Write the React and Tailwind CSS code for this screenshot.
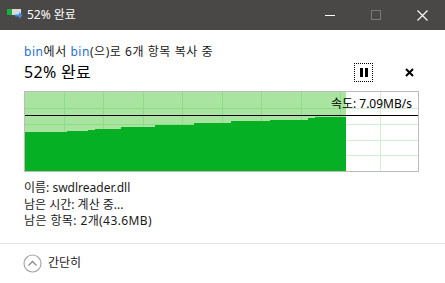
import React from "react";

const F = { fontFamily: '"Noto Sans", "Noto Sans CJK KR", sans-serif' };

function Graph() {
  const W = 395, H = 81, fill = 322;
  const steps = "1,80 1,41 43,41 43,40 64,40 64,39 71,39 71,38 97,38 97,36 131,36 131,34 170,34 170,32 207,32 207,30 246,30 246,29 284,29 284,27 291,27 291,26 322,26 322,80";
  const vx = [40, 79, 119, 158, 198, 237, 277, 316, 356];
  const hy = [17, 33, 49, 64];
  return (
    <div className="relative w-[395px] h-[81px]">
      <svg width={W} height={H} className="block">
        <rect x="0.5" y="0.5" width={W - 1} height={H - 1} fill="#ffffff" stroke="#bcbcbc" />
        <rect x="1" y="1" width={fill - 1} height={H - 2} fill="#a9e5a1" />
        {vx.map((x) => (
          <g key={x}>
            {x < fill ? (
              <line x1={x + 0.5} y1="1" x2={x + 0.5} y2={H - 1} stroke="#8fdc88" />
            ) : (
              <line x1={x + 0.5} y1="1" x2={x + 0.5} y2={H - 1} stroke="#d3efd1" />
            )}
          </g>
        ))}
        {hy.map((y) => (
          <g key={y}>
            <line x1="1" y1={y + 0.5} x2={fill} y2={y + 0.5} stroke="#8fdc88" />
            <line x1={fill} y1={y + 0.5} x2={W - 1} y2={y + 0.5} stroke="#d3efd1" />
          </g>
        ))}
        <polygon points={steps} fill="#06b025" />
        <line x1="1" y1="24.5" x2={W - 1} y2="24.5" stroke="#000000" />
      </svg>
      <div className="absolute right-[7px] top-[5px] text-[12px] leading-[16px] text-black" style={F}>
        속도: 7.09MB/s
      </div>
    </div>
  );
}

export default function App() {
  return (
    <div className="w-[445px] h-[283px] bg-white flex flex-col overflow-hidden text-black" style={F}>
      <div className="h-[30px] bg-[#4a4846] flex items-center shrink-0">
        <svg width="16" height="12" className="ml-[7px]" viewBox="0 0 16 12">
          <rect x="0" y="0" width="14" height="6" fill="#d9d9d9" />
          <rect x="0" y="0" width="5" height="6" fill="#17b03a" />
          <path d="M8 5.5h4V3l3.5 3.5L12 10V7.5H8z" fill="#3a8ee6" />
        </svg>
        <div className="ml-[4px] text-[12px] text-white leading-[16px]">52% 완료</div>
        <div className="flex-1" />
        <div className="w-[46px] h-[30px] flex items-center justify-center">
          <div className="w-[10px] h-px bg-white" />
        </div>
        <div className="w-[46px] h-[30px] flex items-center justify-center">
          <div className="w-[10px] h-[10px] border border-[#7c7a78]" />
        </div>
        <div className="w-[46px] h-[30px] flex items-center justify-center">
          <svg width="11" height="11" viewBox="0 0 11 11">
            <path d="M0.5 0.5L10.5 10.5M10.5 0.5L0.5 10.5" stroke="#ffffff" strokeWidth="1.1" />
          </svg>
        </div>
      </div>

      <div className="pl-[24px] pr-[26px] pt-[13px]">
        <div className="text-[12px] leading-[17px] text-[#1a1a1a] tracking-[0.55px]">
          <span className="text-[#1e6fcf]">bin</span>에서 <span className="text-[#1e6fcf]">bin</span>(으)로 6개 항목 복사 중
        </div>
        <div className="flex items-center h-[24px]">
          <div className="text-[16px] leading-[22px] text-black tracking-[0.3px]">52% 완료</div>
          <div className="flex-1" />
          <div className="w-[19px] h-[19px] border border-dotted border-black flex items-center justify-center gap-[2px] mr-[32px]">
            <div className="w-[3px] h-[9px] bg-black" />
            <div className="w-[3px] h-[9px] bg-black" />
          </div>
          <svg width="9" height="9" viewBox="0 0 9 9" className="mr-[5px]">
            <path d="M1 1L8 8M8 1L1 8" stroke="#000000" strokeWidth="2" />
          </svg>
        </div>
        <div className="mt-[7px]">
          <Graph />
        </div>
        <div className="mt-[8px] text-[12px] leading-[16.5px] text-[#1a1a1a]">
          <div>이름: swdlreader.dll</div>
          <div>남은 시간: 계산 중...</div>
          <div className="tracking-[0.4px]">남은 항목: 2개(43.6MB)</div>
        </div>
      </div>

      <div className="mt-[13px] h-px bg-[#e3e3e3] shrink-0" />
      <div className="flex items-center pl-[23px] pt-[10px]">
        <svg width="19" height="19" viewBox="0 0 19 19">
          <circle cx="9.5" cy="9.5" r="8.5" fill="none" stroke="#a6a6a6" strokeWidth="1.2" />
          <path d="M5.5 11.5L9.5 7.5L13.5 11.5" fill="none" stroke="#8a8a8a" strokeWidth="1.3" />
        </svg>
        <div className="ml-[6px] text-[12px] leading-[16px] text-[#1a1a1a]">간단히</div>
      </div>
    </div>
  );
}
